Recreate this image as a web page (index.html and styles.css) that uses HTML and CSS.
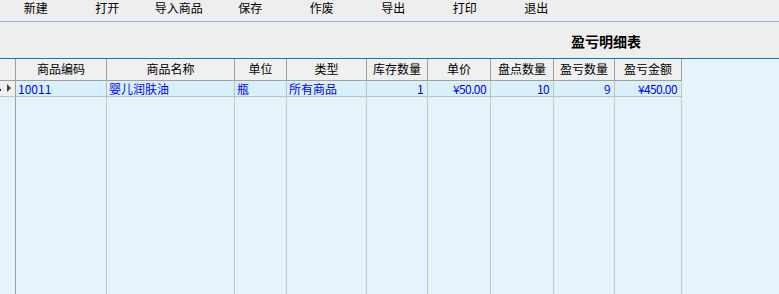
FILE: index.html
```html
<!DOCTYPE html>
<html lang="zh-CN">
<head>
<meta charset="utf-8">
<title>盈亏明细表</title>
<link rel="stylesheet" href="styles.css">
</head>
<body>
<div class="page">
  <div class="toolbar">
    <span class="tool">新建</span>
    <span class="tool">打开</span>
    <span class="tool">导入商品</span>
    <span class="tool">保存</span>
    <span class="tool">作废</span>
    <span class="tool">导出</span>
    <span class="tool">打印</span>
    <span class="tool">退出</span>
  </div>
  <div class="titlebar"><span class="title">盈亏明细表</span></div>
  <div class="grid">
    <div class="hd rh"></div>
    <div class="hd">商品编码</div>
    <div class="hd">商品名称</div>
    <div class="hd">单位</div>
    <div class="hd">类型</div>
    <div class="hd">库存数量</div>
    <div class="hd">单价</div>
    <div class="hd">盘点数量</div>
    <div class="hd">盈亏数量</div>
    <div class="hd">盈亏金额</div>
    <div class="hd extra"></div>

    <div class="cell rh cur"><span class="mark"></span><span class="arrow"></span></div>
    <div class="cell">10011</div>
    <div class="cell">婴儿润肤油</div>
    <div class="cell">瓶</div>
    <div class="cell">所有商品</div>
    <div class="cell num">1</div>
    <div class="cell num">¥50.00</div>
    <div class="cell num">10</div>
    <div class="cell num">9</div>
    <div class="cell num">¥450.00</div>
    <div class="cell extra"></div>

    <div class="fill rh"></div>
    <div class="fill"></div>
    <div class="fill"></div>
    <div class="fill"></div>
    <div class="fill"></div>
    <div class="fill"></div>
    <div class="fill"></div>
    <div class="fill"></div>
    <div class="fill"></div>
    <div class="fill"></div>
    <div class="fill extra"></div>
  </div>
</div>
</body>
</html>
```
FILE: styles.css
```css
html, body {
  margin: 0;
  padding: 0;
}
body {
  width: 779px;
  height: 294px;
  overflow: hidden;
  font-family: "Noto Sans CJK SC", "Noto Sans", sans-serif;
  font-size: 12px;
  color: #000;
  background: #e6f3fa;
}
.page {
  display: flex;
  flex-direction: column;
  height: 294px;
}
.toolbar {
  display: flex;
  height: 21px;
  background: #eeeeee;
  border-bottom: 1px solid #8fb3df;
}
.tool {
  width: 71.5px;
  text-align: center;
  line-height: 16px;
  flex: none;
}
.titlebar {
  height: 36px;
  background: #eeeeee;
  border-bottom: 1px solid #0a7bbd;
  display: flex;
  align-items: center;
  padding-left: 571px;
}
.title {
  font-size: 14px;
  font-weight: bold;
  line-height: 18px;
  padding-top: 1px;
}
.grid {
  flex: 1;
  display: grid;
  grid-template-columns: 16px 91px 128px 52px 80px 61px 63px 63px 61px 67px 1fr;
  grid-template-rows: 22px 16px 1fr;
}
.grid > div {
  box-sizing: border-box;
  white-space: nowrap;
  overflow: hidden;
}
.hd {
  background: #f0f0f0;
  border-right: 1px solid #a0a0a0;
  border-bottom: 1px solid #a0a0a0;
  text-align: center;
  line-height: 20px;
}
.hd.extra {
  background: #e6f3fa;
  border: none;
}
.cell {
  background: #d9f1fc;
  border-right: 1px solid #c0c0c0;
  border-bottom: 1px solid #c0c0c0;
  color: #0000ff;
  line-height: 15px;
  padding-left: 2px;
}
.cell.num {
  text-align: right;
  padding-right: 4px;
  padding-left: 0;
  letter-spacing: -0.6px;
}
.cell.extra {
  background: #e6f3fa;
  border: none;
}
.rh {
  border-right: 1px solid #a0a0a0 !important;
}
.cell.rh {
  background: #f0f0f0;
  position: relative;
  padding: 0;
}
.arrow {
  position: absolute;
  left: 7px;
  top: 3px;
  width: 0;
  height: 0;
  border-top: 4px solid transparent;
  border-bottom: 4px solid transparent;
  border-left: 4px solid #404040;
}
.mark {
  position: absolute;
  left: 0;
  top: 8px;
  width: 1px;
  height: 2px;
  background: #0000ff;
}
.fill {
  border-right: 1px solid #c8c8c8;
}
.fill.extra {
  border: none;
}
```
